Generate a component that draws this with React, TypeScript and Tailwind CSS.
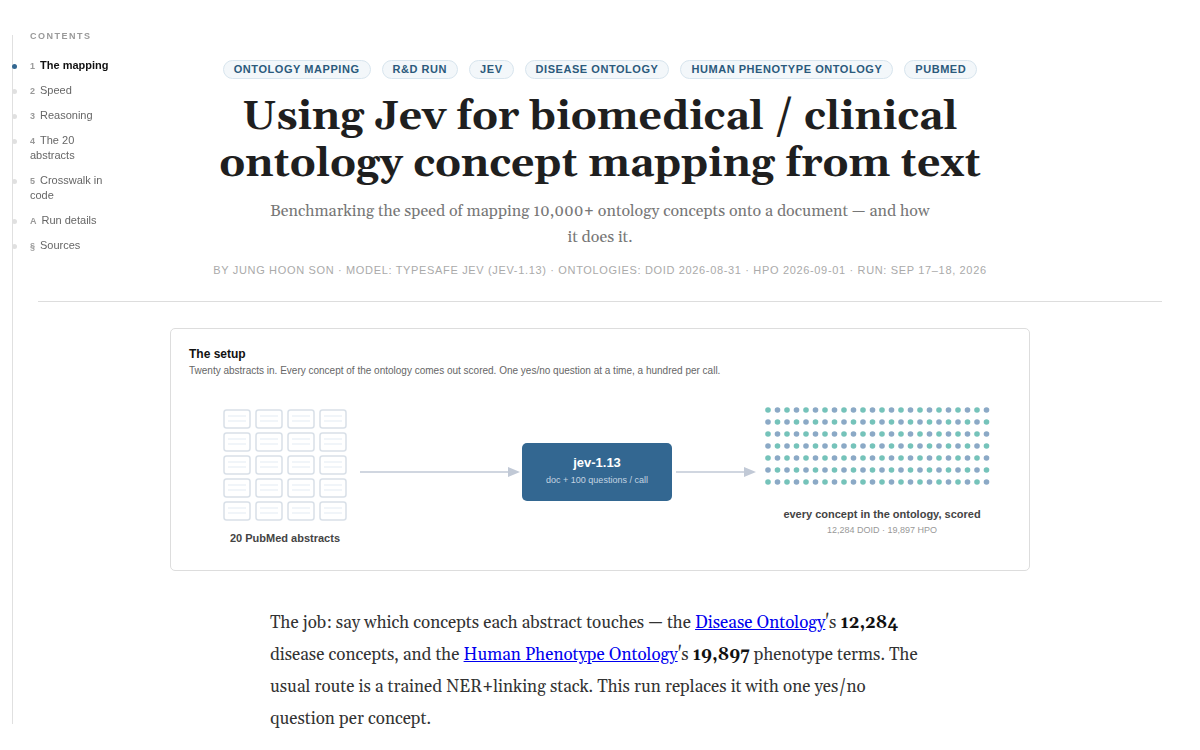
const TAGS = ['Ontology mapping', 'R&D run', 'Jev', 'Disease Ontology', 'Human Phenotype Ontology', 'PubMed']

const SECTIONS = [
  { id: 'mapping', mark: '1', label: 'The mapping' },
  { id: 'speed', mark: '2', label: 'Speed' },
  { id: 'reasoning', mark: '3', label: 'Reasoning' },
  { id: 'abstracts', mark: '4', label: 'The 20 abstracts' },
  { id: 'crosswalk', mark: '5', label: 'Crosswalk in code' },
  { id: 'run', mark: 'A', label: 'Run details' },
  { id: 'sources', mark: '§', label: 'Sources' },
]

const range = (n: number) => Array.from({ length: n }, (_, i) => i)

function Contents({ active }: { active: string }) {
  return (
    <nav
      aria-label="Contents"
      className="fixed top-[35px] bottom-[26px] left-3 w-[102px] border-l border-[#e0e0e0] font-['Liberation_Sans',Arial,sans-serif]"
    >
      <p className="pl-[17px] mt-[-5px] text-[9px] leading-3 font-bold tracking-[1.5px] uppercase text-[#999]">Contents</p>
      <ul className="mt-4 flex flex-col gap-2.5">
        {SECTIONS.map(s => (
          <li key={s.id}>
            <a href={`#${s.id}`} className="flex items-start gap-[13px] text-[11px] leading-[15px]">
              <span
                className={
                  s.id === active
                    ? 'mt-[6px] -ml-px size-[5px] shrink-0 rounded-full bg-[#336791]'
                    : 'mt-[6px] -ml-px size-[5px] shrink-0 rounded-full bg-[#e0e0e0]'
                }
              />
              <span className={s.id === active ? 'font-bold text-[#111]' : 'text-[#666]'}>
                <span className="mr-[5px] text-[9px] leading-none font-bold text-[#999]">{s.mark}</span>
                {s.label}
              </span>
            </a>
          </li>
        ))}
      </ul>
    </nav>
  )
}

function SetupDiagram() {
  return (
    <svg
      viewBox="0 0 822 171"
      className="mt-px block w-full font-['Liberation_Sans',Arial,sans-serif]"
      role="img"
      aria-label="Twenty abstracts go through jev-1.13 and every ontology concept is scored"
    >
      {/* stack of abstracts */}
      {range(20).map(i => {
        const x = 35 + (i % 4) * 32
        const y = 29 + Math.floor(i / 4) * 23
        return (
          <g key={i}>
            <rect x={x} y={y} width="26" height="18" rx="2.5" fill="#fff" stroke="#d9e0e8" strokeWidth="1.5" />
            <path d={`M${x + 4} ${y + 6}h18M${x + 4} ${y + 11}h18`} stroke="#edf2f7" strokeWidth="1.7" />
          </g>
        )
      })}
      <text x="96" y="161" textAnchor="middle" fontSize="11" fontWeight="700" fill="#444">20 PubMed abstracts</text>

      <path d="M171 91h149M487 91h69" stroke="#d0d6e0" strokeWidth="2" />
      <path d="M319 86l12 5-12 5zM555 86l12 5-12 5z" fill="#c1c9d6" />

      <rect x="333" y="62" width="150" height="58" rx="5" fill="#336791" />
      <text x="408" y="86" textAnchor="middle" fontSize="13" fontWeight="700" fill="#fff">jev-1.13</text>
      <text x="408" y="102" textAnchor="middle" fontSize="9" fill="#c3d4e1">doc + 100 questions / call</text>

      {/* scored concepts */}
      {range(7).map(row =>
        range(24).map(col => (
          <circle
            key={`${row}-${col}`}
            cx={579 + col * 9.5}
            cy={29 + row * 12}
            r="2.8"
            fill={(row + col) % 2 === 0 ? '#75c3ba' : '#8ba9c6'}
          />
        ))
      )}
      <text x="693" y="137" textAnchor="middle" fontSize="11" fontWeight="700" fill="#444">every concept in the ontology, scored</text>
      <text x="693" y="152" textAnchor="middle" fontSize="9" fill="#999">12,284 DOID · 19,897 HPO</text>
    </svg>
  )
}

export default function App() {
  return (
    <div className="min-h-screen bg-white font-[Georgia,Gelasio,'Liberation_Serif',serif] text-[#333]">
      <Contents active="mapping" />

      <header className="mx-[38px] border-b border-[#ddd] pt-[60px] pb-[23px] text-center">
        <ul className="flex flex-wrap justify-center gap-[11px] font-['Liberation_Sans',Arial,sans-serif]">
          {TAGS.map(tag => (
            <li
              key={tag}
              className="rounded-full border border-[#d8e5ee] bg-[#f3f7fa] px-2.5 text-[11px] leading-[17px] font-bold tracking-wider uppercase text-[#2b5a7c]"
            >
              {tag}
            </li>
          ))}
        </ul>
        <h1 className="mx-auto mt-[15px] max-w-[820px] text-[41px] leading-[47px] font-bold text-[#1f1f1f]">
          Using Jev for biomedical / clinical ontology concept mapping from text
        </h1>
        <p className="mx-auto mt-2.5 max-w-[660px] text-[16px] leading-[26px] text-[#777]">
          Benchmarking the speed of mapping 10,000+ ontology concepts onto a document — and how it does it.
        </p>
        <p className="mt-3 font-['Liberation_Sans',Arial,sans-serif] text-[11px] leading-4 tracking-[0.06em] uppercase text-[#aaa]">
          By Jung Hoon Son · Model: Typesafe Jev (jev-1.13) · Ontologies: DOID 2026-08-31 · HPO 2026-09-01 · Run: Sep 17–18, 2026
        </p>
      </header>

      <main>
        <section className="mx-auto mt-[26px] max-w-[860px] rounded-[5px] border border-[#ddd] px-[18px] pt-[17px] pb-[18px] font-['Liberation_Sans',Arial,sans-serif]">
          <h2 className="text-[12px] leading-4 font-bold text-[#111]">The setup</h2>
          <p className="text-[10px] leading-[18px] text-[#666]">
            Twenty abstracts in. Every concept of the ontology comes out scored. One yes/no question at a time, a hundred per call.
          </p>
          <SetupDiagram />
        </section>

        <p id="mapping" className="mx-auto mt-9 max-w-[660px] text-[17px] leading-8">
          The job: say which concepts each abstract touches — the{' '}
          <a href="#sources" className="text-[#0000ee] underline">Disease Ontology</a>'s{' '}
          <strong className="text-[#111]">12,284</strong> disease concepts, and the{' '}
          <a href="#sources" className="text-[#0000ee] underline">Human Phenotype Ontology</a>'s{' '}
          <strong className="text-[#111]">19,897</strong> phenotype terms. The usual route is a trained NER+linking
          stack. This run replaces it with one yes/no question per concept.
        </p>
      </main>
    </div>
  )
}
